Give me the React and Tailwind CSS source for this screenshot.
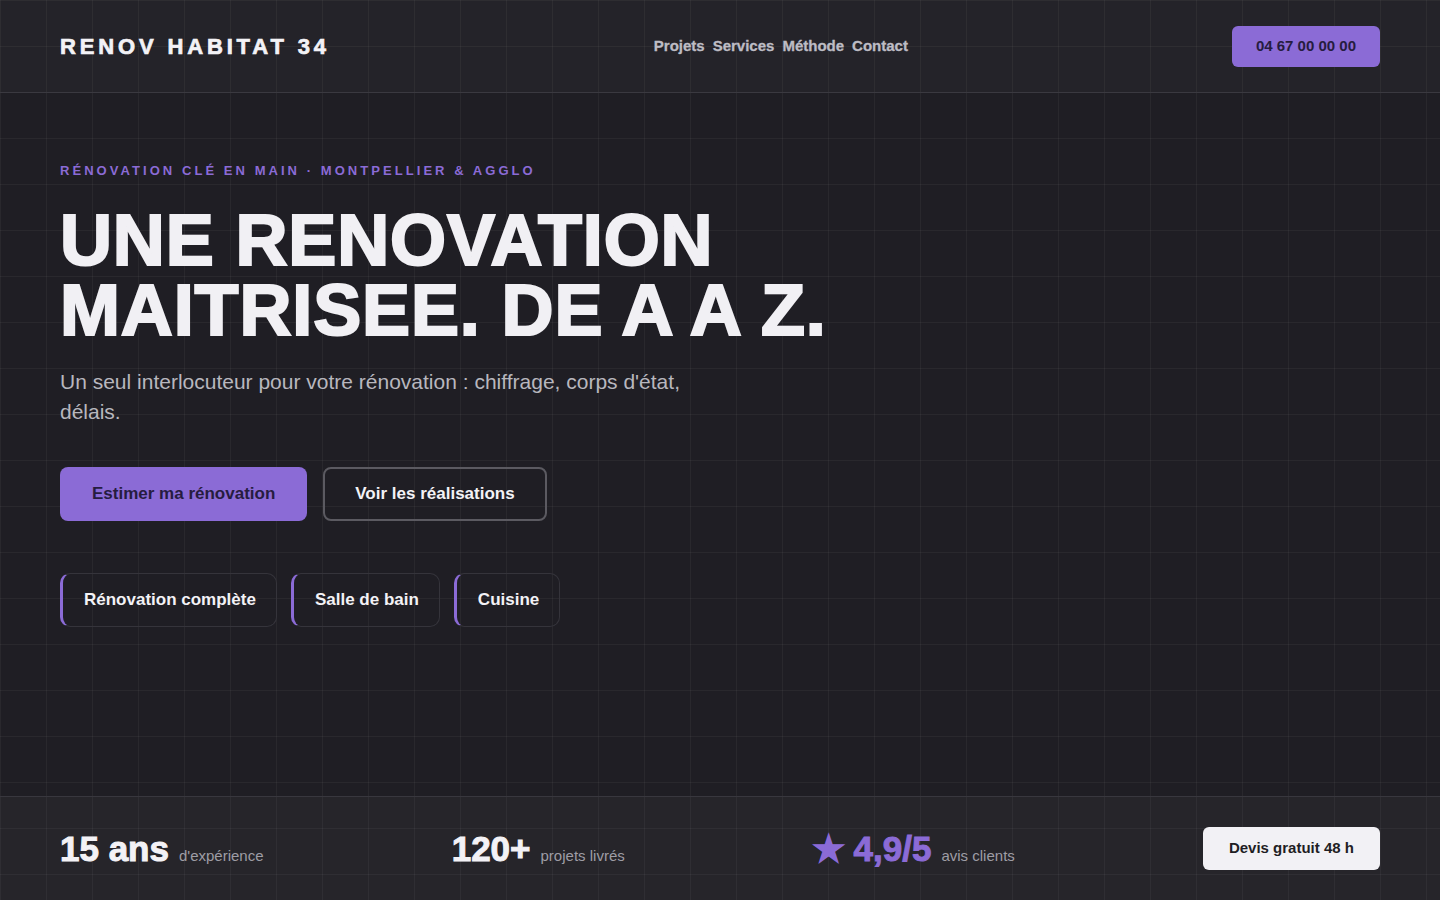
import React from "react";

const font = { fontFamily: '"Liberation Sans", Arial, sans-serif' };

export default function App() {
  return (
    <div
      style={font}
      className="w-full h-[900px] flex flex-col bg-[#1f1e24] text-[#f1f0f4] bg-[linear-gradient(to_right,rgba(255,255,255,0.045)_1px,transparent_1px),linear-gradient(to_bottom,rgba(255,255,255,0.045)_1px,transparent_1px)] bg-[size:46px_46px] overflow-hidden"
    >
      <header className="h-[93px] shrink-0 flex items-center justify-between px-[60px] bg-white/[0.025] border-b border-[#3a3940]">
        <div className="text-[22px] font-bold tracking-[0.175em] text-[#f3f2f6] [-webkit-text-stroke:0.7px_#f3f2f6]">
          RENOV HABITAT 34
        </div>
        <nav className="flex items-center gap-2 text-[15px] font-bold text-[#bdbcc4] [-webkit-text-stroke:0.3px_#bdbcc4]">
          <a>Projets</a>
          <a>Services</a>
          <a>Méthode</a>
          <a>Contact</a>
        </nav>
        <button className="h-[41px] px-6 rounded-md bg-[#8b6bd6] text-[#261c40] text-[15px] font-bold">
          04 67 00 00 00
        </button>
      </header>

      <main className="flex-1 px-[60px] pt-[71px]">
        <div className="text-[13px] font-bold tracking-[0.235em] text-[#8b6bd6] leading-none">
          RÉNOVATION CLÉ EN MAIN · MONTPELLIER &amp; AGGLO
        </div>
        <h1 className="mt-[28px] text-[72px] leading-[70px] font-bold tracking-[0.012em] text-[#f1f0f4] [-webkit-text-stroke:2.2px_#f1f0f4]">
          UNE RENOVATION
          <br />
          MAITRISEE. DE A A Z.
        </h1>
        <p className="mt-[22px] max-w-[640px] text-[21px] leading-[30px] text-[#b8b7be]">
          Un seul interlocuteur pour votre rénovation : chiffrage, corps d'état, délais.
        </p>
        <div className="mt-[40px] flex gap-4">
          <button className="h-[54px] px-8 rounded-lg bg-[#8b6bd6] text-[#261c40] text-[17px] font-bold">
            Estimer ma rénovation
          </button>
          <button className="h-[54px] px-[30px] rounded-lg border-2 border-[#5b5a61] text-[#f3f2f6] text-[17px] font-bold">
            Voir les réalisations
          </button>
        </div>
        <div className="mt-[52px] flex gap-[14px]">
          {["Rénovation complète", "Salle de bain", "Cuisine"].map((t) => (
            <div
              key={t}
              className="h-[54px] flex items-center pl-[21px] pr-[20px] rounded-[10px] border border-[#35343b] border-l-[3px] border-l-[#8b6bd6] text-[17px] font-bold text-[#f3f2f6]"
            >
              {t}
            </div>
          ))}
        </div>
      </main>

      <footer className="h-[104px] shrink-0 flex items-center justify-between px-[60px] bg-white/[0.03] border-t border-[#38373e]">
        <div className="flex items-baseline gap-[10px] pt-[2px]">
          <span className="text-[35px] font-bold text-[#f3f2f6] [-webkit-text-stroke:1px_#f3f2f6]">15 ans</span>
          <span className="text-[15px] text-[#9e9da5]">d'expérience</span>
        </div>
        <div className="flex items-baseline gap-[10px] pt-[2px]">
          <span className="text-[35px] font-bold text-[#f3f2f6] [-webkit-text-stroke:1px_#f3f2f6]">120+</span>
          <span className="text-[15px] text-[#9e9da5]">projets livrés</span>
        </div>
        <div className="flex items-baseline gap-[10px] pt-[2px]">
          <span className="text-[35px] font-bold text-[#8b6bd6] [-webkit-text-stroke:1px_#8b6bd6]">★ 4,9/5</span>
          <span className="text-[15px] text-[#9e9da5]">avis clients</span>
        </div>
        <button className="h-[43px] px-[26px] rounded-md bg-[#f2f1f5] text-[#1f1e24] text-[15px] font-bold">
          Devis gratuit 48 h
        </button>
      </footer>
    </div>
  );
}
